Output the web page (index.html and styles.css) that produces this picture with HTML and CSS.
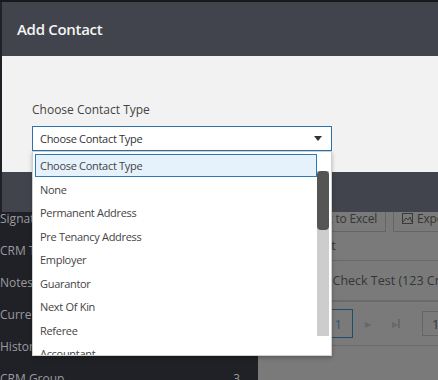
FILE: index.html
```html
<!DOCTYPE html>
<html lang="en">
<head>
    <meta charset="UTF-8">
    <meta name="viewport" content="width=device-width, initial-scale=1.0">
    <title>Add Contact</title>
    <link rel="stylesheet" href="styles.css">
</head>
<body>
    <div class="page">
        <aside class="sidebar">
            <div class="nav-item">Signatures</div>
            <div class="nav-item">CRM Tasks</div>
            <div class="nav-item">Notes</div>
            <div class="nav-item">Current Tenancy</div>
            <div class="nav-item">Historic Tenancies</div>
            <div class="nav-item">CRM Group <span class="count">3</span></div>
        </aside>
        <main class="content">
            <div class="toolbar">
                <div class="tool-btn wide">Export to Excel</div>
                <div class="tool-btn">
                    <svg width="11" height="11" viewBox="0 0 11 11"><rect x="0.5" y="0.5" width="10" height="10" fill="none" stroke="#3a3a3a"/><path d="M1 9 L4 5 L6 7 L8 4 L10 9" fill="none" stroke="#3a3a3a"/></svg>
                    Export to PDF
                </div>
            </div>
            <div class="grid-head">Contact</div>
            <div class="grid-row">Credit Check Test (123 Credit Street)</div>
            <div class="pager">
                <div class="page-box current">1</div>
                <span class="pager-arrow">&#9654;</span>
                <span class="pager-arrow last">&#9654;<i></i></span>
                <div class="page-box">10</div>
            </div>
        </main>
    </div>

    <div class="modal">
        <div class="modal-header">Add Contact</div>
        <div class="modal-body">
            <div class="field-label">Choose Contact Type</div>
            <div class="select-wrap">
                <div class="select">Choose Contact Type <span class="arrow"></span></div>
                <div class="dropdown">
                    <ul class="options">
                        <li class="selected">Choose Contact Type</li>
                        <li>None</li>
                        <li>Permanent Address</li>
                        <li>Pre Tenancy Address</li>
                        <li>Employer</li>
                        <li>Guarantor</li>
                        <li>Next Of Kin</li>
                        <li>Referee</li>
                        <li>Accountant</li>
                        <li>Solicitor</li>
                    </ul>
                    <div class="scrollbar"><div class="thumb"></div></div>
                </div>
            </div>
        </div>
        <div class="modal-footer"></div>
    </div>
</body>
</html>
```

FILE: styles.css
```css
html, body {
    margin: 0;
    height: 100%;
    overflow: hidden;
    background-color: #18191c;
    font-family: 'Open Sans', 'Noto Sans', sans-serif;
}
.page {
    display: flex;
    height: 100%;
    margin-top: 2px;
}
.sidebar {
    width: 258px;
    flex-shrink: 0;
    background-color: #202126;
    padding-top: 200.5px;
    box-sizing: border-box;
}
.nav-item {
    height: 32px;
    display: flex;
    align-items: center;
    justify-content: space-between;
    padding: 0 18px 0 0;
    color: #9a9b9f;
    font-size: 12px;
}
.content {
    flex: 1;
    background-color: #7a7a7a;
    padding-top: 202px;
    color: #353535;
    font-size: 12px;
    letter-spacing: -0.2px;
}
.toolbar {
    display: flex;
    gap: 7px;
    padding-left: 18px;
    height: 28px;
}
.tool-btn {
    display: flex;
    align-items: center;
    gap: 4px;
    border: 1px solid #666;
    padding: 0 8px;
    white-space: nowrap;
    box-sizing: border-box;
}
.tool-btn.wide {
    width: 110px;
    justify-content: flex-end;
}
.grid-head {
    height: 28px;
    line-height: 28px;
    padding-left: 34px;
    font-size: 12.5px;
    border-bottom: 1px solid #686868;
}
.grid-row {
    height: 39px;
    line-height: 39px;
    padding-left: 36px;
    font-size: 12.5px;
    letter-spacing: 0;
    border-bottom: 2px solid #6a6a6a;
    white-space: nowrap;
}
.pager {
    display: flex;
    align-items: center;
    height: 43px;
    padding-left: 65px;
    border-bottom: 1px solid #6a6a6a;
}
.page-box {
    width: 30px;
    height: 29px;
    box-sizing: border-box;
    border: 1px solid #1f4d6b;
    color: #2a5878;
    font-size: 13px;
    display: flex;
    align-items: center;
    justify-content: center;
}
.page-box:last-child {
    border-color: #666;
    color: #353535;
    height: 25px;
    margin-left: 22px;
    justify-content: flex-start;
    padding-left: 9px;
}
.pager-arrow {
    color: #686868;
    font-size: 8px;
    margin-left: 12px;
    width: 8px;
}
.pager-arrow.last {
    margin-left: 19px;
    display: flex;
    align-items: center;
}
.pager-arrow.last i {
    display: inline-block;
    width: 2px;
    height: 9px;
    background-color: #686868;
}

.modal {
    position: absolute;
    top: 2px;
    left: 2px;
    width: 460px;
}
.modal-header {
    height: 54px;
    background-color: #41444d;
    color: #f4f4f4;
    font-size: 15px;
    font-weight: 600;
    letter-spacing: -0.3px;
    line-height: 54px;
    padding-left: 15px;
}
.modal-body {
    background-color: #f2f2f2;
    height: 116px;
    padding: 45px 0 0 30px;
    box-sizing: border-box;
}
.modal-footer {
    height: 40px;
    background-color: #41444d;
}
.field-label {
    color: #444;
    font-size: 12px;
    margin-bottom: 8px;
}
.select-wrap {
    position: relative;
    width: 300px;
}
.select {
    height: 25px;
    box-sizing: border-box;
    border: 1px solid #2b73aa;
    background-color: #fff;
    color: #333;
    font-size: 11px;
    letter-spacing: -0.3px;
    padding-left: 7px;
    display: flex;
    align-items: center;
}
.arrow {
    margin-left: auto;
    margin-right: 9px;
    width: 0;
    height: 0;
    border-left: 4px solid transparent;
    border-right: 4px solid transparent;
    border-top: 5px solid #333;
}
.dropdown {
    position: absolute;
    top: 25px;
    left: 0;
    width: 300px;
    height: 205px;
    box-sizing: border-box;
    background-color: #fff;
    border: 1px solid #cfcfcf;
    box-shadow: 0 2px 4px rgba(0, 0, 0, 0.25);
    display: flex;
    overflow: hidden;
}
.options {
    list-style: none;
    margin: 0;
    padding: 2px 0 0 2px;
    width: 284px;
    box-sizing: border-box;
}
.options li {
    height: 23.5px;
    box-sizing: border-box;
    padding-left: 5px;
    display: flex;
    align-items: center;
    color: #444;
    font-size: 11px;
    letter-spacing: -0.3px;
    white-space: nowrap;
}
.options li.selected {
    background-color: #e5f1fb;
    border: 1px solid #2b7ab3;
    padding-left: 4px;
    height: 23px;
    margin-bottom: 0.5px;
}
.scrollbar {
    width: 12px;
    margin: 19px 0 19px;
    background-color: #cdcdcd;
}
.thumb {
    height: 59px;
    background-color: #555;
    border-radius: 4px;
}
```
